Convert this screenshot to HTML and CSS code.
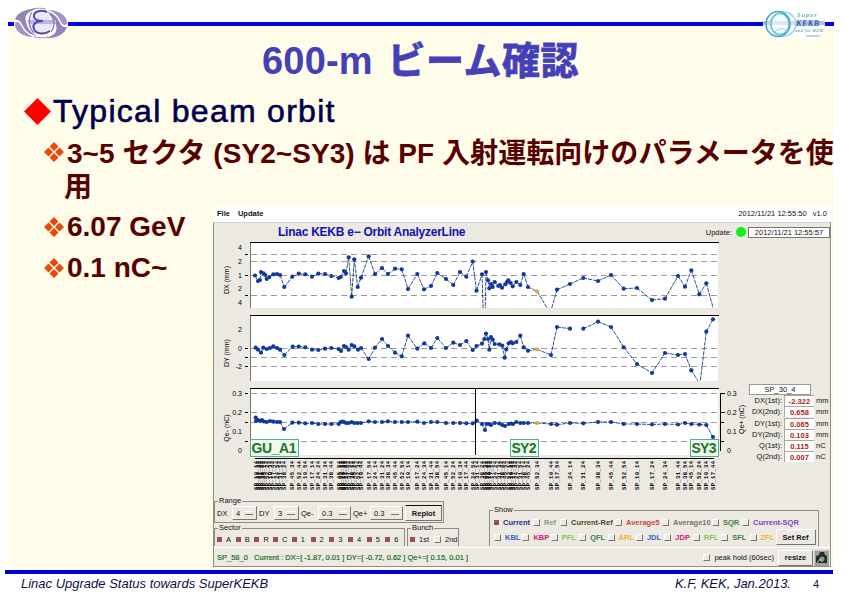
FILE: index.html
```
<!DOCTYPE html>
<html lang="ja">
  <head>
    <meta charset="UTF-8" />
    <meta name="viewport" content="width=device-width, initial-scale=1" />
    <title>600-m ビーム確認</title>
    <link rel="stylesheet" href="styles.css">
  </head>
  <body>
    <div class="slide">
      <!-- Header rule with the two logos -->
      <header class="slide-header">
        <span class="rule rule-start"></span>
        <svg class="logo-linac" width="54" height="34" viewBox="0 0 54 34">
          <ellipse cx="27" cy="17" rx="26.500" ry="15.500" fill="#fff" />
          <path d="M1 13C3 5 14 1 23 2 14 4 10 8 12 15c1 6 5 11 11 14C17 28 12 25 9 19 7 14 4 12 1 13z" fill="#9583b8" />
          <path d="M1 16c2-2 5-1 7 4 2 4 6 8 12 10C9 30 0 24 1 16z" fill="#a494c4" />
          <path d="M53 20c-2 8-13 12-22 11 9-2 13-6 11-13-1-6-5-11-11-14 6 1 11 4 14 10 2 5 5 7 8 6z" fill="#9583b8" />
          <path d="M53 17c-2 2-5 1-7-4-2-4-6-8-12-10 11 0 20 6 19 14z" fill="#a494c4" />
          <path d="M20 30c5 1 10 1 14 0M18 2c5-1 10-1 14 0" fill="none" stroke="#a494c4" />
          <ellipse cx="27" cy="16" rx="11.500" ry="12" fill="#e9e6f8" />
          <path d="M13 13h29v4H15z" fill="#b9b4ec" />
          <path d="M33 5c-7-3-14 0-13 5 1 3 4 4 9 4-8 0-11 4-9 8 2 5 10 6 16 2" fill="none" stroke="#5a479f" stroke-width="2" />
          <path d="M18 5c-4 6-4 15 2 21M36 7c5 5 5 13 1 18" fill="none" stroke="#8570b4" stroke-width="1.200" />
        </svg>
        <span class="rule"></span>
        <svg class="logo-kekb" width="62" height="30" viewBox="0 0 62 30">
          <path d="M0 12h62v4H0z" fill="#b4b8ee" />
          <ellipse cx="20" cy="15" rx="13" ry="12" fill="#fff" fill-opacity=".5" stroke="#94d8e6" stroke-width="1.5" />
          <ellipse cx="15" cy="15" rx="12" ry="12.5" fill="#e6f6fa" fill-opacity=".4" stroke="#43a5c0" stroke-width="1.5" />
          <ellipse cx="17" cy="15" rx="9" ry="10.500" fill="none" stroke="#55b7cc" stroke-width="1.2" />
          <path d="M11 24c3-5 10-6 13-1" fill="none" stroke="#8bd3e0" />
          <text x="34" y="8" class="logo-script" textLength="20">Super</text>
          <text x="33" y="17" class="logo-name" textLength="23">KEKB</text>
          <text x="32" y="23" class="logo-small" textLength="28">and for KEK</text>
          <path d="M43 27h14l2-2" fill="none" stroke="#55b7cc" />
        </svg>
        <span class="rule rule-end"></span>
      </header>

      <main class="slide-body">
        <h1>600-m <span class="title-ja">ビーム確認</span></h1>
        <h2>
          <svg width="27" height="27" viewBox="0 0 27 27"><path d="M13.5 0L27 13.5 13.5 27 0 13.5z" fill="#ff0000" /></svg>
          <span>Typical beam orbit</span>
        </h2>
        <div class="point point-first">
          <svg class="bullet" viewBox="0 0 20 20"><path d="M10 0l4.5 4.5L10 9 5.500 4.500zM10 11l4.500 4.500L10 20l-4.500-4.500zM4.500 5.500L9 10l-4.500 4.500L0 10zM15.500 5.500L20 10l-4.500 4.500L11 10z" /></svg>
          <span>3~5 セクタ (SY2~SY3) は PF 入射運転向けのパラメータを使</span>
        </div>
        <div class="point-wrap">用</div>

        <div class="columns">
          <div class="points">
            <div class="point">
              <svg class="bullet" viewBox="0 0 20 20"><path d="M10 0l4.5 4.5L10 9 5.500 4.500zM10 11l4.500 4.500L10 20l-4.500-4.500zM4.500 5.500L9 10l-4.500 4.500L0 10zM15.500 5.500L20 10l-4.500 4.500L11 10z" /></svg>
              <span>6.07 GeV</span>
            </div>
            <div class="point">
              <svg class="bullet" viewBox="0 0 20 20"><path d="M10 0l4.5 4.5L10 9 5.500 4.500zM10 11l4.500 4.500L10 20l-4.500-4.500zM4.500 5.500L9 10l-4.500 4.500L0 10zM15.500 5.500L20 10l-4.500 4.500L11 10z" /></svg>
              <span>0.1 nC~</span>
            </div>
          </div>

          <!-- Orbit analyzer window -->
          <section class="analyzer">
            <div class="menubar">
              <span>File</span><span>Update</span>
              <span class="version">2012/11/21 12:55:50 &nbsp; v1.0</span>
            </div>
            <div class="window">
              <div class="window-head">
                <h3>Linac KEKB e&minus; Orbit AnalyzerLine</h3>
                <span>Update:</span>
                <i class="lamp"></i>
                <span class="clock">2012/11/21 12:55:57</span>
              </div>

              <div class="plots">
                <svg id="orbit" width="534" height="256" viewBox="214 241 534 256"></svg>
                <div class="readout">
                  <div class="readout-name">SP_30_4</div>
                  <div class="readout-row"><span>DX(1st):</span><b>-2.322</b><span>mm</span></div>
                  <div class="readout-row"><span>DX(2nd):</span><b>0.658</b><span>mm</span></div>
                  <div class="readout-row"><span>DY(1st):</span><b>0.065</b><span>mm</span></div>
                  <div class="readout-row"><span>DY(2nd):</span><b>0.103</b><span>mm</span></div>
                  <div class="readout-row"><span>Q(1st):</span><b>0.115</b><span>nC</span></div>
                  <div class="readout-row"><span>Q(2nd):</span><b>0.007</b><span>nC</span></div>
                </div>
              </div>

              <div class="controls">
                <div class="left-controls">
                  <div class="group range">
                    <span class="legend">Range</span>
                    <span>DX</span><span class="select">4</span>
                    <span>DY</span><span class="select">3</span>
                    <span>Qe-</span><span class="select">0.3</span>
                    <span>Qe+</span><span class="select">0.3</span>
                    <span class="button replot">Replot</span>
                  </div>
                  <div class="group-row">
                    <div class="group sector">
                      <span class="legend">Sector</span>
                      <span class="check on">A</span><span class="check on">B</span>
                      <span class="check on">R</span><span class="check on">C</span>
                      <span class="check on">1</span><span class="check on">2</span>
                      <span class="check on">3</span><span class="check on">4</span>
                      <span class="check on">5</span><span class="check on">6</span>
                    </div>
                    <div class="group bunch">
                      <span class="legend">Bunch</span>
                      <span class="check on">1st</span><span class="check">2nd</span>
                    </div>
                  </div>
                </div>
                <div class="group show">
                  <span class="legend">Show</span>
                  <div class="show-modes">
                    <span class="check on navy">Current</span><span class="check sage">Ref</span>
                    <span class="check olive">Current-Ref</span><span class="check red">Average5</span>
                    <span class="check gray">Average10</span><span class="check green">SQR</span>
                    <span class="check violet">Current-SQR</span>
                  </div>
                  <div class="show-lines">
                    <span class="check blue">KBL</span><span class="check pink">KBP</span>
                    <span class="check lime">PFL</span><span class="check green">QFL</span>
                    <span class="check amber">ARL</span><span class="check blue">JDL</span>
                    <span class="check pink">JDP</span><span class="check lime">RFL</span>
                    <span class="check green">SFL</span><span class="check amber">ZFL</span>
                    <span class="button">Set Ref</span>
                  </div>
                </div>
              </div>

              <div class="statusbar">
                <span class="status">SP_58_0 &nbsp; Current : DX=[ -1.87, 0.01 ] DY=[ -0.72, 0.62 ] Qe+=[ 0.15, 0.01 ]</span>
                <span class="check peak">peak hold (60sec)</span>
                <span class="button resize">resize</span>
                <svg class="camera" width="15" height="16" viewBox="0 0 15 16">
                  <path d="M0 0h15v16H0z" fill="#98a39e" />
                  <path d="M0 16V0h15" fill="none" stroke="#eee" />
                  <path d="M2 6l3-1 1-3h4l1 3 2 1v7H2z" fill="#252c2a" />
                  <circle cx="8" cy="9" r="2.500" fill="#8b9692" />
                  <path d="M3 13l3-4 2 3" fill="none" stroke="#bcc4c0" />
                </svg>
              </div>
            </div>
          </section>
        </div>
      </main>

      <footer>
        <span class="talk">Linac Upgrade Status towards SuperKEKB</span>
        <span class="author">K.F, KEK, Jan.2013.</span>
        <span class="page">4</span>
      </footer>
    </div>
    <script src="orbit.js"></script>
  </body>
</html>
```
FILE: styles.css
```
* {
  box-sizing: border-box;
}
body {
  margin: 0;
  background: #fff;
  font-family: "Liberation Sans", "Noto Sans CJK JP", sans-serif;
}
.slide {
  width: 842px;
  height: 596px;
  overflow: hidden;
}

/* Header rule and logos */
.slide-header {
  display: flex;
  align-items: center;
  position: relative;
  height: 48px;
  margin-bottom: -22px;
  padding: 0 8px;
}
.rule {
  flex: 1;
  height: 4px;
  background: #0000dc;
}
.rule-start {
  flex: 0 0 6px;
}
.rule-end {
  flex: 0 0 9px;
}
.logo-kekb {
  border-radius: 14px;
  background: #fff;
}
.logo-script {
  font: italic 7px "Liberation Serif", serif;
  fill: #2d8ea4;
}
.logo-name {
  font: italic bold 8px "Liberation Serif", serif;
  fill: #1c659b;
}
.logo-small {
  font: italic 5px "Liberation Serif", serif;
  fill: #2d8ea4;
}

/* Slide body */
.slide-body {
  width: 827px;
  height: 544px;
  margin-left: 7px;
  background: #fffcea;
}
h1 {
  margin: 0;
  padding: 11px 0 0 255px;
  height: 66px;
  font-size: 38px;
  line-height: 48px;
  letter-spacing: 0.2px;
  color: #4540b8;
  white-space: nowrap;
}
.title-ja {
  margin-left: 4px;
  letter-spacing: 0.5px;
  -webkit-text-stroke: 0.8px #4540b8;
}
h2 {
  display: flex;
  align-items: center;
  gap: 2px;
  margin: 0;
  height: 39px;
  padding-left: 17px;
  font-size: 32px;
  font-weight: normal;
  letter-spacing: 1.28px;
  line-height: 39px;
  color: #00004c;
  -webkit-text-stroke: 0.6px #00004c;
}
.point {
  display: flex;
  align-items: center;
  gap: 3px;
  height: 41px;
  padding: 1px 0 0 37px;
  font-size: 28px;
  font-weight: bold;
  color: #580000;
  white-space: nowrap;
}
.point-first {
  height: 42px;
  padding-top: 0;
  letter-spacing: 0.05px;
}
.point-first span {
  margin-top: -2px;
}
.point-wrap {
  height: 33px;
  padding-left: 57px;
  font-size: 28px;
  font-weight: bold;
  line-height: 30px;
  color: #580000;
}
.bullet {
  flex: none;
  width: 20px;
  height: 20px;
  fill: #e84a0c;
}
.columns {
  display: flex;
}
.points {
  width: 206px;
}

/* Analyzer window */
.analyzer {
  width: 618px;
  height: 361px;
  font-size: 7.5px;
  color: #111;
  white-space: nowrap;
}
.menubar {
  display: flex;
  gap: 8px;
  height: 16px;
  padding: 0 4px;
  font-weight: bold;
  line-height: 15px;
  background: #fff;
}
.version {
  margin-left: auto;
  font-weight: normal;
}
.window {
  height: 345px;
  border: 1px solid #8f8c80;
  border-top-color: #d6d3ca;
  background: #ece9e3;
}
.window-head {
  display: flex;
  align-items: center;
  height: 18px;
}
h3 {
  margin: 0 auto 0 64px;
  font-size: 12px;
  letter-spacing: -0.25px;
  color: #1410b0;
}
.lamp {
  width: 10px;
  height: 10px;
  margin: 0 2px 0 4px;
  border-radius: 50%;
  background: #14f014;
}
.clock {
  width: 82px;
  height: 11px;
  line-height: 10px;
  text-align: center;
  border: 1px solid #77756e;
  background: #fff;
}
.plots {
  display: flex;
  height: 256px;
}
.readout {
  padding: 143px 0 0 1px;
}
.readout-name {
  width: 62px;
  height: 11px;
  line-height: 10px;
  text-align: center;
  border: 1px solid #999;
  background: #fff;
}
.readout-row {
  display: grid;
  grid-template-columns: 33px 30px 14px;
  gap: 2px;
  height: 11.3px;
  line-height: 11px;
}
.readout-row span:first-child {
  text-align: right;
}
.readout-row b {
  height: 11px;
  text-align: center;
  color: #b02020;
  border: 1px solid #aaa69c;
  border-width: 1px 0 0 1px;
  background: #fff;
}

/* Plot drawing */
.frame {
  fill: #fff;
}
.grid {
  stroke: #9a9a9a;
  stroke-dasharray: 6 4;
}
.axis {
  fill: none;
  stroke: #000;
}
.side {
  stroke: #77756e;
}
.trace {
  fill: none;
  stroke: #1a3a78;
  stroke-width: 0.9;
  stroke-dasharray: 4 1;
}
.dot {
  fill: #1238a0;
}
.dot-mark {
  fill: #d9ac3a;
}
.tick {
  font-size: 7px;
  text-anchor: end;
}
.tick-right {
  font-size: 7px;
}
.monitor {
  font: bold 5.5px "Liberation Mono", monospace;
}
.flag {
  fill: #eef8ee;
  stroke: #4fae96;
}
.flag-text {
  font-size: 14px;
  font-weight: bold;
  fill: #1c7424;
}

/* Controls */
.controls {
  display: flex;
  justify-content: space-between;
  height: 50px;
  padding-right: 11px;
}
.group {
  display: flex;
  align-items: center;
  position: relative;
  border: 1px solid #8f8c80;
}
.legend {
  position: absolute;
  top: -5px;
  left: 3px;
  line-height: 8px;
  padding: 0 1px;
  background: #ece9e3;
}
.left-controls {
  padding-top: 4px;
}
.range {
  display: grid;
  grid-template-columns: 13px 25px 13px 25px 15px 33px 15px 33px 37px;
  column-gap: 2px;
  width: 230px;
  height: 22px;
  padding: 2px 0 0 2px;
}
.select {
  display: flex;
  align-items: center;
  justify-content: space-between;
  height: 14px;
  padding: 0 3px;
  border: 1px solid #fff;
  border-right-color: #77756e;
  border-bottom-color: #77756e;
}
.select::after {
  content: "";
  width: 8px;
  height: 2px;
  border-top: 1px solid #fff;
  border-bottom: 1px solid #77756e;
}
.button {
  display: flex;
  align-items: center;
  justify-content: center;
  height: 16px;
  font-weight: bold;
  border: 1px solid #fff;
  border-right-color: #77756e;
  border-bottom-color: #77756e;
}
.replot {
  border-top-color: #111;
}
.group-row {
  display: flex;
  gap: 2px;
  padding-top: 5px;
}
.sector,
.bunch {
  height: 18px;
  padding: 3px 0 0 2px;
  border-bottom: 0;
}
.sector {
  width: 191px;
}
.sector .check {
  width: 19px;
}
.bunch {
  width: 52px;
}
.bunch .check {
  width: 25px;
}
.check {
  display: flex;
  align-items: center;
  gap: 4px;
}
.check::before {
  content: "";
  width: 5px;
  height: 5px;
  border: 1px solid #fff;
  border-right-color: #77756e;
  border-bottom-color: #77756e;
}
.check.on::before {
  border: 0;
  background: #a04a62;
}
.show {
  flex-direction: column;
  align-items: stretch;
  width: 330px;
  height: 36px;
  margin-top: 13px;
  padding: 4px 0 0 4px;
  border-bottom: 0;
}
.show-modes {
  display: grid;
  grid-template-columns: 39px 27px 55px 47px 50px 30px 60px;
  height: 14px;
  align-items: center;
}
.show-lines {
  display: grid;
  grid-template-columns: repeat(9, 28.4px) 26px 40px;
  height: 16px;
  align-items: center;
}
.show .check {
  font-weight: bold;
}
.navy {
  color: #1c3480;
}
.sage {
  color: #79a08a;
}
.olive {
  color: #4a4820;
}
.red {
  color: #c84848;
}
.gray {
  color: #77756e;
}
.green {
  color: #3f8040;
}
.violet {
  color: #8040c0;
}
.blue {
  color: #3c64c8;
}
.pink {
  color: #d0207c;
}
.lime {
  color: #7cc850;
}
.amber {
  color: #eeb038;
}
.statusbar {
  display: flex;
  align-items: center;
  height: 20px;
  padding: 0 1px 0 3px;
  border-top: 1px solid #fff;
}
.status {
  margin-right: auto;
  color: #1c6c1c;
  -webkit-text-stroke: 0.2px #1c6c1c;
}
.resize {
  width: 35px;
  margin: 0 1px 0 4px;
}

/* Footer */
footer {
  display: flex;
  align-items: center;
  width: 828px;
  height: 23px;
  margin-left: 5px;
  padding-left: 16px;
  border-top: 4px solid #0000dc;
  font-size: 13px;
  font-style: italic;
  color: #101040;
}
.talk {
  margin-right: auto;
}
.page {
  width: 42px;
  padding-left: 22px;
  font-size: 11px;
  font-style: normal;
}
```
FILE: orbit.js
```
const svg = document.getElementById("orbit");

function add(tag, attrs, text) {
  const el = document.createElementNS("http://www.w3.org/2000/svg", tag);
  for (const key in attrs) el.setAttribute(key, attrs[key]);
  if (text) el.textContent = text;
  svg.appendChild(el);
}

function line(x1, y1, x2, y2, cls) {
  add("line", { x1: x1, y1: y1, x2: x2, y2: y2, class: cls });
}

// x,y pairs; "|" breaks the trace
const dx = `255,275.5 258,281 260,280 261,272 263.5,273.3 265.3,275 266.7,279 269.3,277 273.3,274.3 277,274 280,275 284.3,287
292.3,276.7 298.7,273.7 305.3,274.3 312,276.7 318.3,273.7 325,274 331.3,276 338.7,278 340.7,277 344,271 346,273.3 348.7,257.3
351.7,296.7 354.3,259.3 357.7,287 361,277.7 368.7,256.3 375,274 382,268 388,274 395,268.7 401.7,269.3 408,289 417.3,274
424,289.3 431,286 437.3,273 446,279 453.3,285 460,272 466.3,276.7 472.7,261.5 476.5,290.7 482,274.3 483.5,320 485,320 486,272
488,280.3 489.3,288.3 491,284 492.7,287 494.7,282 498.3,286 500,285 502,287.7 505.3,284.3 507,282 508.3,280.3 510.7,283
512.7,286.3 516.3,282 520.3,285 523.7,274 528,287 537,291.3 549,311|550,314 557,289.7 570,284 583.3,278 598,281 611,275
623.7,288.7 637,288 652,300 665,298.7 678,276 685,286.7 691.3,270.3 699.3,294.3 706.3,283.3 714,311`;
const dy = `255.7,347.7 258,349.7 261,352.7 263.3,347.7 266.7,349 270,348 273.3,346.3 277,348 280,349.7 284.3,355 292.7,346.7
298.7,346.7 305.3,347.3 312,349.7 318.3,350 325,348.7 331.3,348 338.7,349 341,351 344,346 346,347 348.7,349.7 351.7,345
354.3,346.3 358,349.7 361,348 368.7,359 375,347.7 382,339 388,346 395,352.7 401.7,356.3 408,335.7 417.3,348.7 424.3,343.3
431,348 437.3,338 446,348 453.3,342.7 460,345 466.3,341 472.7,350 476.5,346 482,343.7 484.3,339 486,333.7 488,339
489.3,349.7 491,337 492.7,339.7 494.7,344 499.3,344.3 502.3,345.7 504.7,357.7 506.3,349.3 508.7,343.3 511,342 512.7,343.3
516.3,342 520.3,335.7 523.7,347.3 528,350.7 537,349.3 551,355 557,327 570,328.7|583.3,328.7 598,321.7 611,327 623.7,347.3
637,364 652,373 665,353 678,355 685,354 691.3,370.3 700,384 706.3,331.7 713,319.3`;
const qe = `255.7,417.5 256,421 258,420 260,421 262,420 264,421.500 266.7,422 270,421 273.3,421.7 277,422 280,422 284,429 292.3,422.7
298.7,422.7 305.3,423.3 312,423 318.3,424 325,424 331.3,424 338.7,424 340.7,422 342.500,421.500 344,422 346,423 348.7,423
351.7,422 354.3,423 357.7,423 361,423 368.7,421.3 375,422 382,422 388,421.3 395,422 401.7,422 408,422 417.3,421.7 424,423
431,422 437.3,422 446,423 453.3,423 460,423 466.3,423.3 472.7,423.3 476.7,420.7 482,424 485,430 486.500,424 489,424 491,425
494.7,423 499.3,423.500 502.3,425 505,426 508.7,424 511,423.500 513,424 516.3,422 520.3,423 523.7,423 528,423 537,423 551,424
557,424.7 570,423 583.3,423.3 598,422 611,422 623.7,424 637,424 652,424.500 665,424 678,424.500 685,423 691.3,424 699.3,424.500
706.3,425 713,437`;

function plot(top, bottom, grid, data) {
  add("rect", { x: 250, y: top, width: 468, height: bottom - top, class: "frame" });
  grid.forEach((y) => line(251, y, 718, y, "grid"));
  data.split("|").forEach((part) => {
    const points = part.trim().split(/\s+/).map((p) => p.split(",").map(Number));
    // cut segments at the lower edge of the frame
    for (let i = 1; i < points.length; i++) {
      let [a, b] = [points[i - 1], points[i]];
      if (a[1] > bottom && b[1] > bottom) continue;
      if (a[1] > bottom) [a, b] = [b, a];
      if (b[1] > bottom) {
        const t = (bottom - a[1]) / (b[1] - a[1]);
        b = [a[0] + t * (b[0] - a[0]), bottom];
      }
      line(a[0], a[1], b[0], b[1], "trace");
    }
    points.filter((p) => p[1] < bottom).forEach((p) => {
      add("circle", { cx: p[0], cy: p[1], r: 2.1, class: p[0] === 537 ? "dot-mark" : "dot" });
    });
  });
  line(250.5, top, 250.5, bottom, "side");
  line(250, top + 0.5, 719, top + 0.5, "axis");
}

plot(242, 308, [254.5, 261.5, 275.5, 295.5], dx);
plot(315, 381, [348.5, 357.5, 366.5], dy);
plot(388, 455, [393.5, 412.5, 422.5, 441.5], qe);

// Scales
[[250, "4"], [264, "2"], [278, "1"], [291, "2"], [305, "4"], [332, "2"], [351, "0"], [369, "-2"],
 [396, "0.3"], [415, "0.2"], [434, "0.1"], [453, "0"]].forEach((t) => {
  add("text", { x: 242, y: t[0], class: "tick" }, t[1]);
});
[254.5, 275.5, 295.5, 348.5, 357.5, 366.5, 393.5, 412.5, 422.5, 441.5].forEach((y) => line(245, y, 248, y, "axis"));
[[280, "DX (mm)"], [353, "DY (mm)"], [428, "Qe- (nC)"]].forEach((t) => {
  add("text", { x: 229, y: t[0], transform: `rotate(-90 229 ${t[0]})`, class: "tick-right", "text-anchor": "middle" }, t[1]);
});
add("path", { d: "M720.5 393v58M720 393.500h5M720 412.500h5M720 422.500h4M720 441.500h4", class: "axis" });
[[396, "0.3"], [415, "0.2"], [434, "0.1"], [453, "0"]].forEach((t) => {
  add("text", { x: 727, y: t[0], class: "tick-right" }, t[1]);
});
add("text", { x: 744, y: 434, transform: "rotate(-90 744 434)", class: "tick-right" }, "Qe+ (nC)");

// Monitor names under the charge plot
line(255, 458.5, 714, 458.5, "axis");
line(475.5, 388, 475.5, 455, "axis");
let last = 0;
qe.trim().split(/\s+/).forEach((p, i) => {
  const x = Number(p.split(",")[0]);
  if (x - last < 1.5) return;
  last = x;
  add("text", { x: x + 2, y: 490, transform: `rotate(-90 ${x + 2} 490)`, class: "monitor", textLength: 29 }, `SP_${10 + (i * 7) % 49}_${1 + i % 5}4`);
});

[[251, 48, "GU_A1"], [511, 28, "SY2"], [691, 28, "SY3"]].forEach((f) => {
  add("rect", { x: f[0] - 0.5, y: 439.5, width: f[1], height: 17, class: "flag" });
  add("text", { x: f[0] + 0.5, y: 453, class: "flag-text", textLength: f[1] - 3 }, f[2]);
});
```
